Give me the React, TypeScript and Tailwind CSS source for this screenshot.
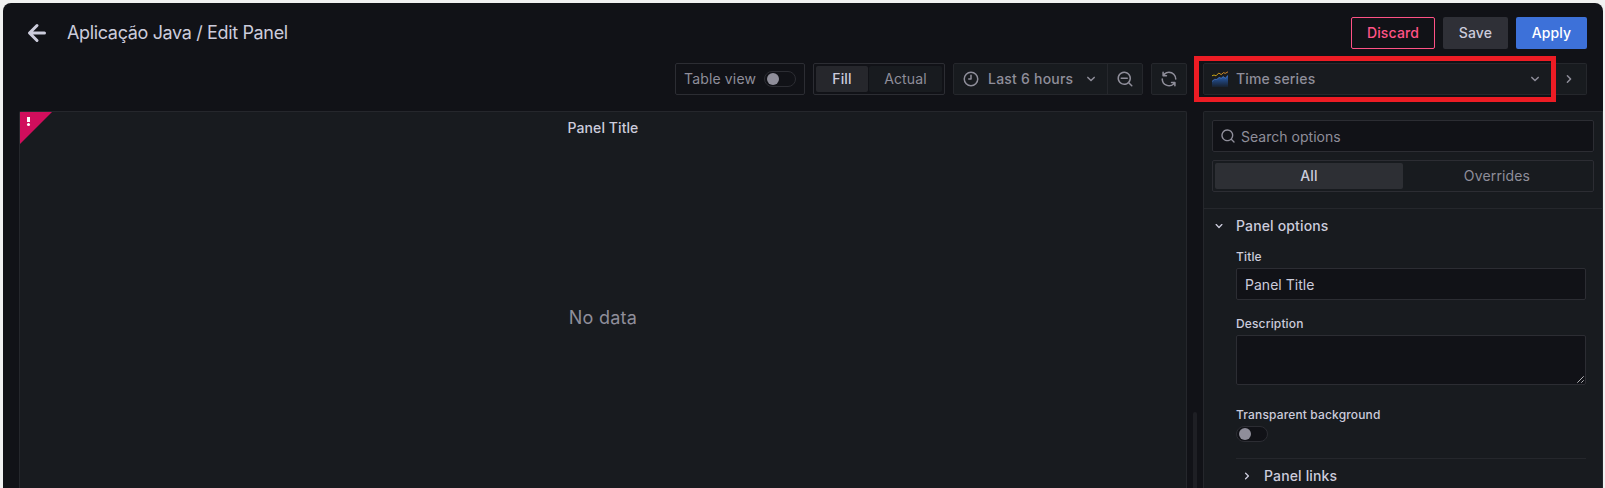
import type { ReactNode } from 'react';

const paths = {
  arrowLeft:
    'M17,11H9.41l3.3-3.29a1,1,0,1,0-1.42-1.42l-5,5a1,1,0,0,0-.21.33,1,1,0,0,0,0,.76,1,1,0,0,0,.21.33l5,5a1,1,0,0,0,1.42,0,1,1,0,0,0,0-1.42L9.41,13H17a1,1,0,0,0,0-2Z',
  angleDown:
    'M17,9.17a1,1,0,0,0-1.41,0L12,12.71,8.46,9.17a1,1,0,0,0-1.41,0,1,1,0,0,0,0,1.42l4.24,4.24a1,1,0,0,0,1.42,0L17,10.59A1,1,0,0,0,17,9.17Z',
  angleRight:
    'M14.83,11.29,10.59,7.05a1,1,0,0,0-1.42,0,1,1,0,0,0,0,1.41L12.71,12,9.17,15.54a1,1,0,0,0,0,1.41,1,1,0,0,0,.71.29,1,1,0,0,0,.71-.29l4.24-4.24A1,1,0,0,0,14.83,11.29Z',
  search:
    'M21.71,20.29,18,16.61A9,9,0,1,0,16.61,18l3.68,3.68a1,1,0,0,0,1.42,0A1,1,0,0,0,21.71,20.29ZM11,18a7,7,0,1,1,7-7A7,7,0,0,1,11,18Z',
  searchMinus:
    'M21.71,20.29,18,16.61A9,9,0,1,0,16.61,18l3.68,3.68a1,1,0,0,0,1.42,0A1,1,0,0,0,21.71,20.29ZM11,18a7,7,0,1,1,7-7A7,7,0,0,1,11,18ZM15,10H7a1,1,0,0,0,0,2h8a1,1,0,0,0,0-2Z',
  clock:
    'M12,2A10,10,0,1,0,22,12,10,10,0,0,0,12,2Zm0,18a8,8,0,1,1,8-8A8,8,0,0,1,12,20ZM12,6a1,1,0,0,0-1,1v4H9a1,1,0,0,0,0,2h3a1,1,0,0,0,1-1V7A1,1,0,0,0,12,6Z',
  sync:
    'M19.91,15.51H15.38a1,1,0,0,0,0,2h2.4A8,8,0,0,1,4,12a1,1,0,1,0-2,0,10,10,0,0,0,16.88,7.23V21a1,1,0,0,0,2,0V16.5A1,1,0,0,0,19.91,15.51ZM12,2A10,10,0,0,0,5.12,4.77V3a1,1,0,0,0-2,0V7.5a1,1,0,0,0,1,1h4.5a1,1,0,0,0,0-2H6.22A8,8,0,0,1,20,12a1,1,0,0,0,2,0A10,10,0,0,0,12,2Z',
};

function Icon({ name, size = 18 }: { name: keyof typeof paths; size?: number }) {
  return (
    <svg width={size} height={size} viewBox="0 0 24 24" fill="currentColor" className="shrink-0">
      <path d={paths[name]} />
    </svg>
  );
}

function TimeSeriesIcon() {
  return (
    <svg width="16" height="16" viewBox="0 0 80 80" className="shrink-0">
      <defs>
        <linearGradient id="area" x1="0" y1="22" x2="0" y2="80" gradientUnits="userSpaceOnUse">
          <stop offset="0" stopColor="#3274d9" stopOpacity="0.85" />
          <stop offset="1" stopColor="#1f60c4" stopOpacity="0.1" />
        </linearGradient>
        <linearGradient id="line" x1="0" y1="0" x2="80" y2="0" gradientUnits="userSpaceOnUse">
          <stop offset="0" stopColor="#f2cc0c" />
          <stop offset="1" stopColor="#ff9830" />
        </linearGradient>
      </defs>
      <path d="M0 52 12 42 24 42 36 32 46 36 56 28 66 36 80 22V80H0Z" fill="url(#area)" />
      <path d="M0 52 12 42 24 42 36 32 46 36 56 28 66 36 80 22" fill="none" stroke="#5794f2" strokeWidth="3" />
      <path d="M0 24 10 20 20 24 34 10 46 18 58 8 66 12 80 4" fill="none" stroke="url(#line)" strokeWidth="4" />
    </svg>
  );
}

function Toggle() {
  return (
    <span className="flex h-4 w-8 shrink-0 items-center rounded-full border border-[#2c2d33] bg-[#111217] pl-0.5">
      <span className="size-3 rounded-full bg-[#8f8e9a]" />
    </span>
  );
}

function Label({ children }: { children: ReactNode }) {
  return <div className="text-xs leading-[15px] font-medium tracking-[0.15px]">{children}</div>;
}

export default function App() {
  return (
    <div
      className="h-[488px] w-[1605px] overflow-hidden bg-[#f1f1f1] pt-[3px] pl-[3px] text-sm tracking-[0.15px] text-[#ccccdc]"
      style={{ fontFamily: 'Inter, "Liberation Sans", sans-serif' }}
    >
      <div className="flex h-[485px] w-[1600px] flex-col overflow-hidden rounded-t-lg bg-[#111217]">
        <header className="flex h-[60px] shrink-0 items-center pr-4 pl-4">
          <Icon name="arrowLeft" size={36} />
          <h1 className="ml-3 grow text-lg font-normal tracking-[-0.35px]">Aplicação Java / Edit Panel</h1>
          <div className="flex gap-2 font-medium">
            <button className="h-8 w-[84px] rounded-xs border border-[#ff5286] text-[#ff5286]">Discard</button>
            <button className="h-8 w-[65px] rounded-xs bg-[#2f3037]">Save</button>
            <button className="h-8 w-[71px] rounded-xs bg-[#3d71d9] text-white">Apply</button>
          </div>
        </header>

        <div className="flex h-12 shrink-0 text-[#8f8e9a]">
          <div className="flex w-[1184px] justify-end gap-2">
            <div className="flex h-8 w-[130px] items-center justify-between rounded-xs border border-[#2c2d33] pr-2 pl-2">
              <span>Table view</span>
              <Toggle />
            </div>
            <div className="flex h-8 w-[132px] gap-px rounded-xs border border-[#2c2d33] p-0.5">
              <div className="flex w-[52px] items-center justify-center rounded-xs bg-[#26272c] font-medium text-[#ccccdc]">
                Fill
              </div>
              <div className="flex grow items-center justify-center rounded-xs bg-[#181b1f]">Actual</div>
            </div>
            <div className="flex h-8 w-[190px] rounded-xs border border-[#25272c] bg-[#181b1f] font-medium">
              <div className="flex w-[154px] items-center border-r border-[#25272c] pl-2">
                <Icon name="clock" />
                <span className="ml-2 w-[94px] tracking-[0.22px]">Last 6 hours</span>
                <Icon name="angleDown" />
              </div>
              <div className="flex grow items-center justify-center">
                <Icon name="searchMinus" />
              </div>
            </div>
            <div className="flex h-8 w-9 items-center justify-center rounded-xs border border-[#25272c] bg-[#181b1f]">
              <Icon name="sync" />
            </div>
          </div>
          <div className="relative ml-4 flex h-8 w-[384px]">
            <div className="flex grow items-center rounded-xs border border-[#25272c] bg-[#181b1f] pl-2 font-medium">
              <TimeSeriesIcon />
              <span className="ml-2 grow">Time series</span>
              <span className="mr-[7px] flex">
                <Icon name="angleDown" />
              </span>
            </div>
            <div className="flex w-[35px] items-center justify-center rounded-r-xs border border-l-0 border-[#25272c] bg-[#181b1f]">
              <Icon name="angleRight" />
            </div>
            <div className="absolute -top-[7px] -left-[9px] h-[46px] w-[362px] border-5 border-[#ed1c24]" />
          </div>
        </div>

        <main className="flex grow">
          <section className="relative ml-4 flex w-[1168px] flex-col items-center rounded-tl-xs rounded-tr-xs border border-b-0 border-[#25272c] bg-[#181b1f]">
            <div className="absolute top-0 left-0 size-8 bg-[#d10e5c] [clip-path:polygon(0_0,100%_0,0_100%)]" />
            <span className="absolute top-[5px] left-[6px] flex h-[9px] w-1 flex-col items-center justify-between">
              <span className="h-[5px] w-[3px] bg-white" />
              <span className="h-[3px] w-[3px] rounded-full bg-white" />
            </span>
            <h2 className="mt-[6px] font-medium tracking-[0.08px]">Panel Title</h2>
            <p className="mt-[166px] text-lg tracking-[0.25px] text-[#8f8e9a]">No data</p>
          </section>

          <div className="flex w-4 items-end pl-[6px]">
            <div className="h-[76px] w-1 rounded-t-sm bg-[#1e1f24]" />
          </div>

          <aside className="w-[400px] overflow-hidden rounded-tl-xs border border-b-0 border-[#25272c] bg-[#181b1f]">
            <div className="flex h-[97px] flex-col gap-2 border-b border-[#25272c] px-2 pt-2">
              <div className="flex h-8 shrink-0 items-center rounded-xs border border-[#2c2d33] bg-[#111217] pl-[7px] text-[#8f8e9a]">
                <Icon name="search" size={16} />
                <span className="ml-[5px] pt-0.5 tracking-[0.02px]">Search options</span>
              </div>
              <div className="flex h-8 shrink-0 rounded-xs border border-[#2c2d33] p-0.5">
                <div className="flex flex-1 items-center justify-center rounded-xs bg-[#2d2f34] font-medium">All</div>
                <div className="flex flex-1 items-center justify-center text-[#8f8e9a]">Overrides</div>
              </div>
            </div>
            <div className="flex items-center pt-[7px] pl-[7px]">
              <Icon name="angleDown" size={16} />
              <h3 className="ml-[9px] font-medium">Panel options</h3>
            </div>
            <div className="pr-4 pl-8">
              <div className="pt-[13px]">
                <Label>Title</Label>
                <div className="mt-1 flex h-8 items-center rounded-xs border border-[#2c2d33] bg-[#111217] pt-0.5 pl-2 tracking-[0.02px]">
                  Panel Title
                </div>
              </div>
              <div className="pt-4">
                <Label>Description</Label>
                <div className="mt-1 flex h-[50px] items-end justify-end rounded-xs border border-[#2c2d33] bg-[#111217] p-px">
                  <svg width="7" height="7" viewBox="0 0 7 7" stroke="#c6c6ca" strokeWidth="0.9">
                    <path d="M0.3 6.7 6.7 0.3M4.3 6.7 6.7 4.3" />
                  </svg>
                </div>
              </div>
              <div className="pt-[22px]">
                <Label>Transparent background</Label>
                <div className="mt-1">
                  <Toggle />
                </div>
              </div>
              <div className="mt-4 flex items-center border-t border-[#25272c] pt-[7px] pl-[3px]">
                <Icon name="angleRight" size={16} />
                <h3 className="ml-[9px] font-medium">Panel links</h3>
              </div>
            </div>
          </aside>
        </main>
      </div>
    </div>
  );
}
